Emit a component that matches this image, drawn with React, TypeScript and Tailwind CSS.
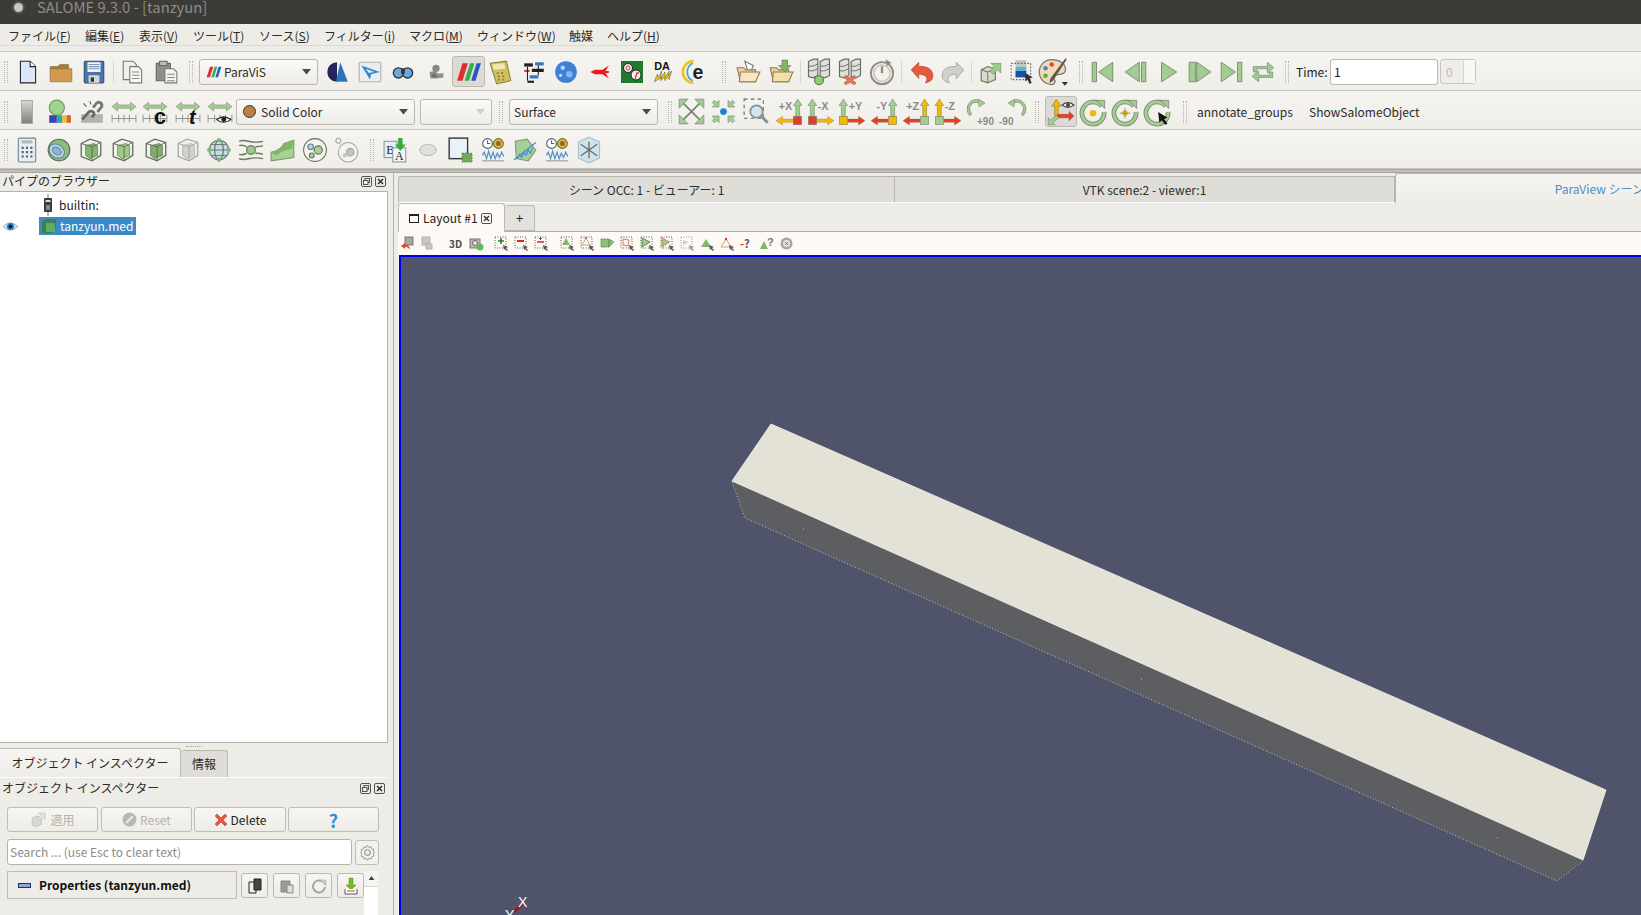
import type { ReactNode } from "react";

const GREEN = "#a3cc93";
const GSTROKE = "#74836a";
const RED = "#e03f28";
const YEL = "#f5b800";

function Ico({ children, s = 26 }: { children: ReactNode; s?: number }) {
  return (
    <svg width={s} height={s} viewBox="0 0 24 24" className="block shrink-0 overflow-visible">
      {children}
    </svg>
  );
}

function S({ w = "w-[32px]", on, children }: { w?: string; on?: boolean; children: ReactNode }) {
  return (
    <div className={`${w} flex h-[31px] shrink-0 items-center justify-center ${on ? "rounded-[3px] border border-[#bdbab4] bg-[#dcdad5]" : ""}`}>
      {children}
    </div>
  );
}

function Grip({ w = "w-[11px]" }: { w?: string }) {
  return (
    <div className={`${w} flex shrink-0 justify-center`}>
      <div className="h-[22px] w-[4px] border-x border-dotted border-[#b5b2ab]" />
    </div>
  );
}

function Sep({ w }: { w: string }) {
  return (
    <div className={`${w} flex shrink-0 justify-center`}>
      <div className="h-[22px] w-px bg-[#d8d5cf]" />
    </div>
  );
}

function Caret({ c = "#4a4a48" }: { c?: string }) {
  return (
    <svg width="9" height="6" viewBox="0 0 9 6" className="shrink-0">
      <path d="M0 0h9L4.500 5.500z" fill={c} />
    </svg>
  );
}

function Combo({ w, children, off }: { w: string; children?: ReactNode; off?: boolean }) {
  return (
    <div className={`${w} flex h-[26px] shrink-0 items-center justify-between rounded-[3px] border border-[#bab7b1] bg-gradient-to-b from-[#fbfaf8] to-[#eeece7] pl-[6px] pr-[6px] text-[12px] text-[#2a2a2a]`}>
      <div className="flex items-center gap-[5px]">{children}</div>
      <Caret c={off ? "#d0cec8" : "#4a4a48"} />
    </div>
  );
}

const Logo = ({ s = 26 }: { s?: number }) => (
  <Ico s={s}>
    <path d="M1 20 6 4h5L6 20z" fill="#de2f2f" />
    <path d="M8 20 13 4h4l-5 16z" fill="#2fb04a" />
    <path d="M14 20 19 4h4l-5 16z" fill="#2a58cc" />
  </Ico>
);

const Folder = ({ f = "#d19a4c" }: { f?: string }) => (
  <>
    <path d="M2 7h7l2-2h8v4H2z" fill="#a97a3a" stroke="#8a6a35" strokeWidth=".6" />
    <path d="M2 9h20v12H2z" fill={f} stroke="#8a6a35" strokeWidth=".6" />
  </>
);

const Server = () => (
  <>
    <path d="M3 3l4-2h4v14l-4 2-4-1z" fill="#dfe0da" stroke="#6b6b66" />
    <path d="M13 3l4-2h4v14l-4 2-4-1z" fill="#dfe0da" stroke="#6b6b66" />
    <path d="M3 7h4l4-2M13 7h4l4-2M3 11h4l4-2M13 11h4l4-2" stroke="#6b6b66" fill="none" strokeWidth=".8" />
  </>
);

// double arrow over a ruler, used by the rescale buttons
const Rescale = ({ children }: { children?: ReactNode }) => (
  <Ico>
    <path d="M1 7l5-4v2.500h12V3l5 4-5 4V8.500H6V11z" fill={GREEN} stroke={GSTROKE} strokeWidth=".5" />
    <path d="M1 18h22M1 14.500v7M7 14.500v7M12 14.500v7M17 14.500v7M23 14.500v7" stroke="#8a8a86" strokeWidth=".8" />
    {children}
  </Ico>
);

function AxisIcon({ label, flip, up, side, box }: { label: string; flip: boolean; up: string; side: string; box: string }) {
  const t = flip ? "translate(24 0) scale(-1 1)" : undefined;
  return (
    <svg width="26" height="26" viewBox="0 0 24 24" className="block shrink-0 overflow-visible">
      <g transform={t}>
        <path d="M4 0l4 6H5.800v10H2.200V6H0z" fill={up} stroke={GSTROKE} strokeWidth=".5" />
        <path d="M8 18.500h10V16l6 4-6 4v-2.500H8z" fill={side} stroke="#8f6a40" strokeWidth=".3" />
        <rect x=".3" y="16" width="7.700" height="7.700" fill={box} stroke="#777" strokeWidth=".5" />
      </g>
      <text x={flip ? 15 : 9} y="10" fontSize="10" fill="#8a8a86" fontFamily="Liberation Sans" fontWeight="700" textAnchor={flip ? "end" : "start"}>
        {label}
      </text>
    </svg>
  );
}

const Spin = ({ children }: { children?: ReactNode }) => (
  <Ico s={28}>
    <path d="M19.500 7A9.500 9.500 0 1 0 21.500 12" fill="none" stroke={GSTROKE} strokeWidth="4" />
    <path d="M19.500 7A9.500 9.500 0 1 0 21.500 12" fill="none" stroke={GREEN} strokeWidth="2.600" />
    <path d="M15 2h7v7z" fill={GREEN} stroke={GSTROKE} strokeWidth=".6" />
    {children}
  </Ico>
);

const Vcr = ({ d }: { d: string }) => (
  <Ico>
    <path d={d} fill={GREEN} stroke={GSTROKE} strokeWidth=".8" />
  </Ico>
);

const CubeG = ({ f = "#83b66f", s = "#5f6d57" }: { f?: string; s?: string }) => (
  <Ico>
    <path d="M3 6l8-4 10 3v12l-8 5-10-4z" fill="none" stroke={s} strokeWidth="1.200" />
    <path d="M7 8l8-2 3 2v9l-7 3-4-3z" fill={f} stroke={s} strokeWidth=".6" />
    <path d="M3 6l10 3v13M13 9l8-4" fill="none" stroke={s} strokeWidth=".9" />
  </Ico>
);

const ClockChart = () => (
  <Ico>
    <circle cx="7" cy="6" r="4.500" fill="#fff" stroke="#55606a" />
    <path d="M7 3v3h2.500" stroke="#55606a" fill="none" />
    <circle cx="17" cy="6" r="4.500" fill="#e5b640" stroke="#7d6a2a" />
    <rect x="15" y="4" width="4" height="4" fill="#7d6a2a" />
    <path d="M2 17l2-3 2 6 2-7 2 7 2-6 2 6 2-5 2 4 2-5 2 4" fill="none" stroke="#4d8fc9" strokeWidth="1.100" />
    <path d="M2 22h20" stroke="#9a9a95" />
  </Ico>
);

function Tiny({ children }: { children: ReactNode }) {
  return (
    <svg width="15" height="15" viewBox="0 0 15 15" className="block shrink-0">
      {children}
    </svg>
  );
}

const SelBox = ({ children }: { children?: ReactNode }) => (
  <Tiny>
    <rect x="1" y="1" width="11" height="11" fill="none" stroke="#555" strokeDasharray="1 1.500" />
    {children}
    <path d="M9 9l5 2-2 1 2 2-1 1-2-2-1 1z" fill="#555" />
  </Tiny>
);

const DockBtns = () => (
  <div className="flex items-center gap-[3px]">
    <svg width="11" height="11" viewBox="0 0 11 11">
      <rect x=".5" y=".5" width="10" height="10" rx="1.500" fill="none" stroke="#55534e" />
      <rect x="4" y="2.500" width="4.500" height="4" fill="none" stroke="#55534e" />
      <rect x="2.500" y="4.500" width="4.500" height="4" fill="#f1efea" stroke="#55534e" />
    </svg>
    <svg width="11" height="11" viewBox="0 0 11 11">
      <rect x=".5" y=".5" width="10" height="10" rx="1.500" fill="none" stroke="#55534e" />
      <path d="M3 3l5 5M8 3L3 8" stroke="#33322f" strokeWidth="1.600" />
    </svg>
  </div>
);

function Toolbar({ pad = "pt-[1px]", children }: { pad?: string; children: ReactNode }) {
  return (
    <div className={`${pad} flex h-[39px] items-center border-b border-[#c9c6c0] bg-gradient-to-b from-[#f6f4f0] to-[#f0eee9]`}>
      {children}
    </div>
  );
}

function MenuItem({ w, label, k }: { w: string; label: string; k?: string }) {
  return (
    <div className={`${w} shrink-0 border-b border-[#dcdad4] pb-[1px] pl-[8px] text-[12px] leading-[16px] text-[#2b2b29]`}>
      {label}
      {k && (
        <>
          (<span className="underline">{k}</span>)
        </>
      )}
    </div>
  );
}

function Row1() {
  return (
    <Toolbar>
      <Grip />
      <S w="w-[33px]">
        <Ico>
          <path d="M5 2h9l5 5v15H5z" fill="#dbe6fb" stroke="#222" />
          <path d="M14 2v5h5" fill="#fff" stroke="#222" />
        </Ico>
      </S>
      <S w="w-[33px]">
        <Ico><Folder /></Ico>
      </S>
      <S w="w-[33px]">
        <Ico>
          <rect x="3" y="2" width="18" height="20" rx="1" fill="#4a72ab" stroke="#2f4d78" />
          <rect x="6" y="3" width="12" height="9" fill="#f2f4f7" />
          <path d="M7 5h10M7 7h10M7 9h10" stroke="#7a93b8" />
          <rect x="7" y="15" width="10" height="7" fill="#d6d6d0" />
          <rect x="9" y="17" width="3" height="4" fill="#333" />
        </Ico>
      </S>
      <Sep w="w-[6px]" />
      <S w="w-[33px]">
        <Ico>
          <path d="M3 2h9l3 3v14H3z" fill="#eeeeea" stroke="#777" />
          <path d="M9 7h8l3 3v12H9z" fill="#f7f7f4" stroke="#777" />
          <path d="M11 12h7M11 15h7M11 18h7" stroke="#888" />
        </Ico>
      </S>
      <S w="w-[33px]">
        <Ico>
          <path d="M3 4h13v16H3z" fill="#8f8d88" stroke="#666" />
          <path d="M6 2h7v4H6z" fill="#bdbbb5" stroke="#666" />
          <path d="M11 9h8l3 3v10H11z" fill="#f3f3ef" stroke="#777" />
          <path d="M13 14h7M13 17h7M13 20h7" stroke="#888" />
        </Ico>
      </S>
      <Grip w="w-[17px]" />
      <Combo w="w-[119px]">
        <Logo s={16} />
        <span className="-ml-[3px]">ParaViS</span>
      </Combo>
      <div className="w-[2px] shrink-0" />
      <S w="w-[33px]">
        <Ico>
          <path d="M12 3a9 9 0 0 0 0 18z" fill="#26245c" />
          <path d="M15 3l7 18H11z" fill="#2c74b8" />
        </Ico>
      </S>
      <S w="w-[33px]">
        <Ico>
          <rect x="2" y="3" width="20" height="18" rx="1" fill="#e9eef2" stroke="#aab2b8" />
          <path d="M4 6l17 6-8 2-1 5z" fill="#2f88c5" />
          <path d="M8 9l8 3-5 1z" fill="#e9eef2" />
        </Ico>
      </S>
      <S w="w-[33px]">
        <Ico s={22}>
          <circle cx="7" cy="13" r="5.500" fill="#6aa9dc" stroke="#334" strokeWidth="1.500" />
          <circle cx="17" cy="13" r="5.500" fill="#6aa9dc" stroke="#334" strokeWidth="1.500" />
          <rect x="10" y="8" width="4" height="6" fill="#334" />
        </Ico>
      </S>
      <S w="w-[33px]">
        <Ico s={22}>
          <circle cx="12" cy="8" r="4" fill="#8a8883" />
          <path d="M5 12l5-1 5 3 5-1v5l-7 1H6z" fill="#8f8d88" />
          <path d="M7 17l3-4 3 5z" fill="#6a6864" />
        </Ico>
      </S>
      <S w="w-[33px]" on>
        <Logo s={26} />
      </S>
      <S>
        <Ico>
          <path d="M2 4l15-2 4 18-13 3z" fill="#cfc15f" stroke="#8d8440" />
          <path d="M4 5l11-1 1 5-11 1z" fill="#efe9b0" />
          <path d="M8 13h2M12 13h2M9 16h2M13 16h2M9 19h2M13 19h2" stroke="#8d8440" strokeWidth="1.500" />
        </Ico>
      </S>
      <S w="w-[33px]">
        <Ico>
          <path d="M3 4h8v3H3z" fill="#222" />
          <path d="M13 3h8v3h-8z" fill="#3a75c4" />
          <path d="M3 10h5v2H3z" fill="#d94343" />
          <path d="M10 9h11v3H10z" fill="#222" />
          <path d="M8 15h8v3H8z" fill="#3a75c4" />
          <path d="M6 20h6v2H6z" fill="#222" />
          <path d="M6 7v13M16 6v9" stroke="#222" />
        </Ico>
      </S>
      <S w="w-[31px]">
        <Ico>
          <circle cx="12" cy="12" r="10" fill="#3f7fd6" />
          <circle cx="9" cy="8" r="2" fill="#bcd6f5" />
          <circle cx="15" cy="14" r="3" fill="#87b4ea" />
          <circle cx="7" cy="15" r="1.500" fill="#bcd6f5" />
        </Ico>
      </S>
      <S w="w-[34px]">
        <Ico>
          <path d="M1 12h4l4-2h7l6-4-3 5h3v2h-3l3 5-6-4H9l-4-2H1z" fill="#ed1c24" />
        </Ico>
      </S>
      <S w="w-[33px]">
        <Ico s={24}>
          <rect x="1" y="1" width="22" height="22" fill="#1f7a2c" />
          <circle cx="8" cy="8" r="4.500" fill="#eee" stroke="#222" />
          <circle cx="8" cy="8" r="2" fill="none" stroke="#d33" />
          <circle cx="16" cy="15" r="5" fill="#eee" stroke="#222" />
          <path d="M15 19l2-6h2" fill="none" stroke="#d33" strokeWidth="1.300" />
        </Ico>
      </S>
      <S w="w-[33px]">
        <Ico>
          <text x="2" y="10" fontSize="10" fontWeight="700" fontFamily="Liberation Sans" fill="#111">DA</text>
          <path d="M2 21l3-7 1 3 3-6-1 7 4-6v5l4-6-1 5 3-5-2 8-2-2-2 3-1-3-3 3 1-3z" fill="#f2c811" stroke="#333" strokeWidth=".4" />
        </Ico>
      </S>
      <S w="w-[33px]">
        <Ico>
          <path d="M8 2A10 10 0 0 0 8 22" fill="none" stroke="#f0c419" strokeWidth="2.500" />
          <path d="M7 4A9 9 0 0 0 7 20" fill="none" stroke="#3ca0dc" strokeWidth="1.500" />
          <text x="7" y="18" fontSize="18" fontWeight="700" fontFamily="Liberation Sans" fill="#222">e</text>
        </Ico>
      </S>
      <Grip w="ml-[3px] w-[14px]" />
      <S w="w-[33px]">
        <Ico>
          <path d="M9 2l8 4-4 9z" fill="#fff" stroke="#777" />
          <path d="M2 8h6l2 2h9v11H5z" fill="#f3d59a" stroke="#8a7a5a" />
          <path d="M5 12h18l-4 9H4z" fill="#fae6bc" stroke="#8a7a5a" />
        </Ico>
      </S>
      <S w="w-[33px]">
        <Ico>
          <path d="M2 8h6l2 2h9v11H5z" fill="#eed08d" stroke="#8a7a5a" />
          <path d="M5 12h18l-4 9H4z" fill="#f5dfa9" stroke="#8a7a5a" />
          <path d="M13 1h5v5h3l-5.500 6L10 6h3z" fill="#7fb765" stroke="#5a7a50" strokeWidth=".6" />
        </Ico>
      </S>
      <Sep w="w-[6px]" />
      <S w="w-[31px]">
        <Ico s={28}>
          <Server />
          <circle cx="12" cy="19" r="3.800" fill="#8fcf6f" stroke="#5a7a50" />
        </Ico>
      </S>
      <S>
        <Ico s={28}>
          <Server />
          <path d="M8 15l4 2 4-2 1 2-3 2 3 2-1 2-4-2-4 2-1-2 3-2-3-2z" fill="#e8735a" stroke="#a0442e" strokeWidth=".4" />
        </Ico>
      </S>
      <S w="w-[31px]">
        <Ico s={28}>
          <circle cx="12" cy="13" r="9.500" fill="none" stroke="#8f8d80" strokeWidth="1.600" />
          <circle cx="12" cy="13" r="7" fill="none" stroke="#c4c2b6" strokeWidth="1.200" />
          <path d="M12 7v6" stroke="#8f8d80" strokeWidth="2" />
          <path d="M15 1l5 3-4 3z" fill="#8f8d80" />
        </Ico>
      </S>
      <Sep w="w-[9px]" />
      <S w="w-[31px]">
        <Ico>
          <path d="M2 10l7-7v4c8-1 13 3 13 8s-3 6-7 7c3-3 2-8-6-8v4z" fill="#e35a3e" stroke="#b13f28" strokeWidth=".6" />
        </Ico>
      </S>
      <S w="w-[31px]">
        <Ico>
          <path d="M22 10l-7-7v4C7 6 2 10 2 15s3 6 7 7c-3-3-2-8 6-8v4z" fill="#d0cfcb" stroke="#a5a49f" strokeWidth=".8" />
        </Ico>
      </S>
      <Sep w="w-[7px]" />
      <S w="w-[31px]">
        <Ico>
          <path d="M3 10l6-3 7 2v10l-7 3-6-2z" fill="#d9dacf" stroke="#6e8a60" strokeWidth="1.200" />
          <path d="M3 10l6 2v10M9 12l7-3" fill="none" stroke="#6e8a60" />
          <path d="M12 4h9v9l-3-3-4 4-3-3 4-4z" fill="#9ccc88" stroke="#6e8a60" strokeWidth=".6" />
        </Ico>
      </S>
      <S w="w-[31px]">
        <Ico>
          <rect x="6" y="1" width="10" height="6" fill="#c9c6bd" />
          <rect x="6" y="7" width="10" height="4" fill="#58b9c8" />
          <rect x="6" y="11" width="10" height="6" fill="#1e4fa8" />
          <rect x="2" y="4" width="18" height="15" fill="none" stroke="#666" strokeDasharray="1.500 1.500" />
          <path d="M15 13l7 4-3 1 2 4-2 1-2-4-2 2z" fill="#333" />
        </Ico>
      </S>
      <S>
        <Ico s={30}>
          <path d="M11 2C5 2 1 7 1 12s4 10 10 10c3 0 3-3 2-4-1-2 0-4 3-4 4 0 6-1 6-4 0-5-5-8-11-8z" fill="#f3d9b5" stroke="#777" />
          <circle cx="6" cy="9" r="1.800" fill="#3a8fd0" />
          <circle cx="11" cy="6" r="1.800" fill="#e2452f" />
          <circle cx="6" cy="15" r="1.800" fill="#59ad4a" />
          <path d="M22 1l1 1-11 17-3 2 1-4z" fill="#5f5a4a" />
          <path d="M19 20h5l-2.500 3z" fill="#333" />
        </Ico>
      </S>
      <Grip w="ml-[6px] w-[12px]" />
      <S>
        <Vcr d="M2 3h4v18H2zM21 3v18L8 12z" />
      </S>
      <S>
        <Vcr d="M16 3v18L3 12zM18 3h4v18h-4z" />
      </S>
      <S w="w-[33px]">
        <Vcr d="M6 3v18l14-9z" />
      </S>
      <S w="w-[31px]">
        <Vcr d="M2 3h6v18H2zM9 3l13 9-13 9z" />
      </S>
      <S>
        <Vcr d="M3 3l13 9-13 9zM18 3h4v18h-4z" />
      </S>
      <S w="w-[31px]">
        <Ico>
          <path d="M3 12V7h13V3l6 5-6 5V9H6v3zM21 12v5H8v4l-6-5 6-5v4h10v-3z" fill={GREEN} stroke={GSTROKE} strokeWidth=".6" />
        </Ico>
      </S>
      <Grip w="w-[18px]" />
      <div className="w-[34px] shrink-0 text-[12px] text-[#222]">Time:</div>
      <div className="flex h-[26px] w-[108px] shrink-0 items-center rounded-[3px] border border-[#bab7b1] bg-white pl-[3px] text-[12px] text-[#111]">
        1
      </div>
      <div className="ml-[2px] flex h-[25px] w-[36px] shrink-0 rounded-[3px] border border-[#c9c6c0] bg-[#efede8]">
        <div className="flex w-[22px] items-center pl-[5px] text-[12px] text-[#bdbbb5]">0</div>
        <div className="flex-1 border-l border-[#d8d5cf] bg-[#f8f7f4]" />
      </div>
    </Toolbar>
  );
}

function Row2() {
  return (
    <Toolbar pad="pt-[3px]">
      <Grip />
      <S>
        <svg width="12" height="24" viewBox="0 0 12 24">
          <defs>
            <linearGradient id="grayBar" x1="0" x2="0" y1="0" y2="1">
              <stop offset="0" stopColor="#d8d7d3" />
              <stop offset="1" stopColor="#807e7a" />
            </linearGradient>
          </defs>
          <rect x=".5" y=".5" width="11" height="23" fill="url(#grayBar)" stroke="#aaa" />
        </svg>
      </S>
      <S>
        <Ico>
          <circle cx="10" cy="8" r="7" fill="#9bd68a" stroke="#6e9a60" />
          <rect x="3" y="15" width="7" height="7" fill="#3b3fb8" />
          <rect x="10" y="15" width="5" height="7" fill="#2fa6a6" />
          <rect x="15" y="15" width="4" height="7" fill="#e8c22c" />
          <rect x="19" y="15" width="4" height="7" fill="#e2602c" />
        </Ico>
      </S>
      <S w="w-[33px]">
        <Ico>
          <rect x="2" y="14" width="20" height="8" fill="#b5b3ae" />
          <path d="M13 8l3-4a3 3 0 0 1 5 3l-4 5" fill="none" stroke="#7a7875" strokeWidth="2.600" />
          <path d="M3 19l6-7a3 3 0 0 1 5 2l-2 3" fill="none" stroke="#6a6865" strokeWidth="2.600" />
          <path d="M7 7L4 4M11 5l-1-3" stroke="#555" />
        </Ico>
      </S>
      <S w="w-[31px]"><Rescale /></S>
      <S>
        <Rescale>
          <text x="11" y="23" fontSize="20" fontWeight="700" fontFamily="Liberation Sans" fill="#111">c</text>
        </Rescale>
      </S>
      <S w="w-[33px]">
        <Rescale>
          <text x="13" y="23" fontSize="18" fontWeight="700" fontStyle="italic" fontFamily="Liberation Sans" fill="#111">t</text>
        </Rescale>
      </S>
      <S>
        <Rescale>
          <path d="M9 19q6-5 13 0-7 5-13 0z" fill="#fff" stroke="#222" />
          <circle cx="15.500" cy="19" r="2.300" fill="#222" />
        </Rescale>
      </S>
      <Combo w="w-[179px]">
        <span className="block h-[13px] w-[13px] rounded-full border border-[#333] bg-[#c67e3c]" />
        <span>Solid Color</span>
      </Combo>
      <div className="w-[5px] shrink-0" />
      <Combo w="w-[72px]" off />
      <Grip w="w-[17px]" />
      <Combo w="w-[149px]">
        <span className="-ml-[2px]">Surface</span>
      </Combo>
      <Grip w="ml-[6px] w-[11px]" />
      <S>
        <Ico s={27}>
          <path d="M3 3l18 18M21 3L3 21" stroke="#7a7a70" strokeWidth="1.400" />
          <path d="M1 1h8L1 9zM23 1v8l-8-8zM1 23v-8l8 8zM23 23h-8l8-8z" fill={GREEN} stroke={GSTROKE} strokeWidth=".6" />
        </Ico>
      </S>
      <S w="w-[33px]">
        <Ico s={27}>
          <circle cx="12" cy="12" r="3" fill="#1f84c9" />
          <path d="M8 8H2l2-2-2-2 2-2 2 2 2-2zM16 8h6l-2-2 2-2-2-2-2 2-2-2zM8 16H2l2 2-2 2 2 2 2-2 2 2zM16 16h6l-2 2 2 2-2 2-2-2-2 2z" fill={GREEN} stroke={GSTROKE} strokeWidth=".5" />
        </Ico>
      </S>
      <S>
        <Ico s={27}>
          <rect x="1" y="1" width="17" height="17" fill="none" stroke="#666" strokeDasharray="3 3" />
          <circle cx="12" cy="12" r="5.500" fill="#d4e6f2" stroke="#8a8f94" strokeWidth="1.600" />
          <path d="M16 16l6 6" stroke="#8a8f94" strokeWidth="2.500" />
        </Ico>
      </S>
      <S w="w-[33px]"><AxisIcon label="+X" flip up={GREEN} side={YEL} box={RED} /></S>
      <S w="w-[31px]"><AxisIcon label="-X" flip={false} up={GREEN} side={YEL} box={RED} /></S>
      <S><AxisIcon label="+Y" flip={false} up={GREEN} side={RED} box={YEL} /></S>
      <S><AxisIcon label="-Y" flip up={GREEN} side={RED} box={YEL} /></S>
      <S><AxisIcon label="+Z" flip up={YEL} side={RED} box={GREEN} /></S>
      <S w="w-[31px]"><AxisIcon label="-Z" flip={false} up={YEL} side={RED} box={GREEN} /></S>
      <S w="w-[34px]">
        <svg width="30" height="28" viewBox="0 0 30 28" className="overflow-visible">
          <path d="M17 5A8 8 0 1 0 6 17" fill="none" stroke={GSTROKE} strokeWidth="3.200" />
          <path d="M17 5A8 8 0 1 0 6 17" fill="none" stroke={GREEN} strokeWidth="2" />
          <path d="M13 1l7 4-6 4z" fill={GREEN} stroke={GSTROKE} strokeWidth=".5" />
          <text x="29" y="27" fontSize="10" fontWeight="700" textAnchor="end" fontFamily="Liberation Sans" fill="#8a8a86">+90</text>
        </svg>
      </S>
      <S w="w-[31px]">
        <svg width="30" height="28" viewBox="0 0 30 28" className="overflow-visible">
          <path d="M13 5a8 8 0 1 1 11 12" fill="none" stroke={GSTROKE} strokeWidth="3.200" />
          <path d="M13 5a8 8 0 1 1 11 12" fill="none" stroke={GREEN} strokeWidth="2" />
          <path d="M17 1l-7 4 6 4z" fill={GREEN} stroke={GSTROKE} strokeWidth=".5" />
          <text x="1" y="27" fontSize="10" fontWeight="700" fontFamily="Liberation Sans" fill="#8a8a86">-90</text>
        </svg>
      </S>
      <Grip w="w-[17px]" />
      <S on>
        <Ico s={28}>
          <path d="M8 1l4 6h-2.500v8H6.500V7H4z" fill={YEL} stroke="#8a7a30" strokeWidth=".5" />
          <path d="M9 14h10v-2.500l4 4-4 4V17H9z" fill={RED} stroke="#a0442e" strokeWidth=".4" />
          <path d="M8 15l2 2-5 4 2 2H1v-6l2 2z" fill={GREEN} stroke={GSTROKE} strokeWidth=".5" />
          <path d="M13 6q5-4 10 0-5 4-10 0z" fill="#fff" stroke="#444" />
          <circle cx="18" cy="6" r="1.800" fill="#444" />
        </Ico>
      </S>
      <S><Spin><circle cx="12" cy="13" r="2.800" fill={YEL} /></Spin></S>
      <S>
        <Spin>
          <circle cx="12" cy="13" r="2.400" fill={YEL} />
          <path d="M12 8.500v9M7.500 13h9" stroke="#8a8a70" strokeWidth=".8" />
        </Spin>
      </S>
      <S>
        <Spin>
          <path d="M13 12l8 5-3 1 3 4-2 1-3-4-2 2z" fill="#111" />
        </Spin>
      </S>
      <Grip w="w-[24px]" />
      <div className="w-[112px] shrink-0 text-[12px] text-[#2a2a2a]">annotate_groups</div>
      <div className="shrink-0 text-[12px] text-[#2a2a2a]">ShowSalomeObject</div>
    </Toolbar>
  );
}

function Row3() {
  return (
    <Toolbar pad="pt-[2px]">
      <Grip />
      <S>
        <Ico>
          <rect x="4" y="1" width="16" height="22" rx="1" fill="#e7edf2" stroke="#74828c" />
          <rect x="7" y="3" width="10" height="3" fill="#a9bcc9" />
          <path d="M7 10h2M11 10h2M15 10h2M7 14h2M11 14h2M15 14h2M7 18h2M11 18h2M15 18h2" stroke="#56646e" strokeWidth="2" />
        </Ico>
      </S>
      <S>
        <Ico>
          <circle cx="12" cy="12" r="10" fill="#8ebc7a" stroke="#5f6d57" />
          <ellipse cx="10" cy="13" rx="7.500" ry="6" fill="#bcd9e8" stroke="#5f8aa0" transform="rotate(35 10 13)" />
          <ellipse cx="10" cy="13" rx="4.500" ry="3.200" fill="#8fb5c9" stroke="#5f8aa0" transform="rotate(35 10 13)" />
        </Ico>
      </S>
      <S><CubeG /></S>
      <S><CubeG f="#9ccb88" /></S>
      <S w="w-[33px]"><CubeG f="#7fae6a" /></S>
      <S w="w-[31px]"><CubeG f="#d2d2cc" s="#a8a8a2" /></S>
      <S>
        <Ico>
          <circle cx="12" cy="12" r="9" fill="#c4dcec" stroke="#5f6d57" />
          <ellipse cx="12" cy="12" rx="4" ry="9" fill="none" stroke="#5f6d57" />
          <path d="M3 12h18M5 7h14M5 17h14" stroke="#5f6d57" strokeWidth=".8" />
          <circle cx="12" cy="3" r="2" fill="#7fb765" />
          <circle cx="12" cy="21" r="2" fill="#7fb765" />
          <circle cx="3" cy="12" r="2" fill="#7fb765" />
          <circle cx="21" cy="12" r="2" fill="#7fb765" />
        </Ico>
      </S>
      <S w="w-[31px]">
        <Ico>
          <path d="M1 4c7-3 10 3 22 0M1 8c3-1 5 0 7 1M16 9c3 0 5 0 7-1M1 16c3 1 5 0 7-1M16 15c3 0 5 0 7 1M1 20c7 3 10-3 22 0" fill="none" stroke="#6a7a60" strokeWidth="1.300" />
          <circle cx="12" cy="12" r="4" fill="#9ccb88" stroke="#5f6d57" />
        </Ico>
      </S>
      <S w="w-[33px]">
        <Ico>
          <path d="M1 14q8-1 12-8l9-3v16l-21 3z" fill="#a7d197" stroke="#7d9a70" />
          <path d="M1 14q8-1 12-8l9-3-2 8q-9 1-14 6z" fill="#7fb765" />
        </Ico>
      </S>
      <S w="w-[31px]">
        <Ico>
          <circle cx="12" cy="12" r="10.500" fill="#f5f4ef" stroke="#66705e" />
          <circle cx="8" cy="9" r="2.600" fill="#b9d2e2" stroke="#5f7a8a" />
          <circle cx="15" cy="12" r="3.800" fill="#a3d38f" stroke="#66705e" />
          <circle cx="9" cy="17" r="2.200" fill="#a3d38f" stroke="#66705e" />
        </Ico>
      </S>
      <S w="w-[33px]">
        <Ico>
          <circle cx="13" cy="14" r="9" fill="#f5f4ef" stroke="#a5a49f" />
          <circle cx="15" cy="14" r="3.500" fill="#c4c3be" stroke="#a5a49f" />
          <circle cx="10" cy="17" r="2" fill="#c4c3be" />
          <circle cx="4" cy="3.500" r="2.300" fill="#f5f4ef" stroke="#a5a49f" />
        </Ico>
      </S>
      <Grip w="w-[17px]" />
      <S>
        <Ico>
          <rect x="1" y="4" width="12" height="15" fill="#e8eef5" stroke="#8b98a5" />
          <text x="3" y="16" fontSize="11" fontFamily="Liberation Serif" fill="#222">B</text>
          <rect x="9" y="10" width="12" height="13" fill="#f5f5f2" stroke="#8b98a5" />
          <text x="11" y="21" fontSize="11" fontFamily="Liberation Serif" fill="#222">A</text>
          <path d="M14 1h4v6h3l-5 6-5-6h3z" fill="#2fae3f" />
        </Ico>
      </S>
      <S w="w-[31px]">
        <Ico s={22}>
          <ellipse cx="12" cy="12" rx="9" ry="6" fill="#dfe0de" stroke="#8a8a86" strokeDasharray="1.500 1" />
        </Ico>
      </S>
      <S w="w-[33px]">
        <Ico>
          <rect x="2" y="1" width="17" height="19" fill="#cfe3f5" stroke="#3b3b3b" strokeWidth="1.300" />
          <path d="M3 2h15v10l-5 7H3z" fill="#e9f2fb" />
          <rect x="14" y="15" width="9" height="8" fill="#6fae58" stroke="#4f8a3d" strokeDasharray="1.500 1" />
        </Ico>
      </S>
      <S w="w-[33px]"><ClockChart /></S>
      <S>
        <Ico>
          <path d="M3 4l11-2 8 10-7 10-11-2z" fill="#a7cf9a" stroke="#7d9a70" />
          <path d="M2 21L22 5M5 20l2-4 2 3 2-5 2 3 2-5 2 3 2-5" fill="none" stroke="#3d8fc9" strokeWidth="1.100" />
        </Ico>
      </S>
      <S w="w-[31px]"><ClockChart /></S>
      <S w="w-[33px]">
        <Ico s={28}>
          <path d="M12 1l9 4v14l-9 4-9-4V5z" fill="#cfe3ef" stroke="#a9bdc9" />
          <path d="M5 7l14 10M19 7L5 17M12 5v14" stroke="#6a6a5c" strokeWidth="1.100" />
        </Ico>
      </S>
    </Toolbar>
  );
}

function Viewport() {
  return (
    <div className="ml-px flex-1 overflow-hidden border-l-2 border-t-2 border-[#0000f0] bg-[#50546a] pl-px pt-px">
      <svg width="1239" height="658" viewBox="402 257 1239 658" className="block">
        <rect x="402" y="257" width="1239" height="658" fill="#50546a" />
        <path d="M732 480 745 517 1557 880 1583 859z" fill="#5d5e61" />
        <path d="M771 423 732 480 1583 859 1606 789z" fill="#e4e1d7" />
        <path d="M771 423 1606 789 1583 859 732 480z" fill="none" stroke="#f6f5ee" strokeWidth=".8" />
        <path d="M732 481 745 517 1557 880 1583 860" fill="none" stroke="#c3c4c8" strokeWidth="1" strokeDasharray="1 2" />
        <path d="M803 528h1M1141 678h1M1497 837h1" stroke="#b9bac0" />
        <path d="M513 909l9-7 1 3-8 7z" fill="#9a1c1c" />
        <text x="518" y="906" fontSize="14" fill="#fff" fontFamily="Liberation Sans">X</text>
        <text x="505" y="919" fontSize="14" fill="#fff" fontFamily="Liberation Sans">Y</text>
      </svg>
    </div>
  );
}

function ViewerTools() {
  return (
    <div className="flex h-[23px] items-center bg-[#fdf9f5] pl-[2px]">
      <div className="flex w-[20px] justify-start">
        <Tiny>
          <rect x="5" y="1" width="8" height="8" fill="#a8a69f" stroke="#777" />
          <path d="M1 10l4-3v2c4 0 5 2 5 5-1-2-2-3-5-3v2z" fill="#e2452f" />
        </Tiny>
      </div>
      <div className="flex w-[20px]">
        <Tiny>
          <rect x="2" y="1" width="8" height="8" fill="#c9c7c1" stroke="#b4b2ac" />
          <path d="M6 7l6 1v5H6z" fill="#c9c7c1" stroke="#b4b2ac" />
        </Tiny>
      </div>
      <div className="w-[9px]" />
      <div className="w-[20px] text-[10px] font-bold leading-none text-[#4b4b48]">3D</div>
      <div className="w-[25px]">
        <Tiny>
          <rect x="1" y="3" width="10" height="9" fill="#bdbbb5" stroke="#777" />
          <circle cx="6" cy="7" r="2.500" fill="#e8e6e0" stroke="#666" />
          <circle cx="11" cy="11" r="3.500" fill="#5bbd5b" />
        </Tiny>
      </div>
      <div className="flex w-[20px]">
        <SelBox><path d="M4 5h6M7 2v6" stroke="#1d8a2c" strokeWidth="1.600" /></SelBox>
      </div>
      <div className="flex w-[20px]">
        <SelBox><path d="M3 5h7" stroke="#d22" strokeWidth="2" /></SelBox>
      </div>
      <div className="flex w-[26px]">
        <SelBox><path d="M3 6h7" stroke="#d22" strokeWidth="1.500" /><path d="M6.500 1v3M5 2.500h3" stroke="#1d8a2c" /></SelBox>
      </div>
      <div className="flex w-[20px]">
        <SelBox><path d="M6 2l4 7H2z" fill="#7fb765" /></SelBox>
      </div>
      <div className="flex w-[20px]">
        <SelBox><path d="M6 2l4 7H2z" fill="none" stroke="#c9a86a" /><circle cx="6" cy="2" r="1" fill="#d33" /></SelBox>
      </div>
      <div className="flex w-[20px]">
        <Tiny>
          <path d="M1 3h8l5 3-5 5H1z" fill="#8cc07a" stroke="#5f8a50" strokeDasharray="1 .5" />
          <path d="M9 3v8" stroke="#5f8a50" />
        </Tiny>
      </div>
      <div className="flex w-[20px]">
        <SelBox><path d="M3 3l6 1-1 6-5-1z" fill="none" stroke="#d9775a" /></SelBox>
      </div>
      <div className="flex w-[20px]">
        <SelBox><path d="M2 2l8 4-8 5z" fill="#9ccb88" stroke="#5f8a50" /></SelBox>
      </div>
      <div className="flex w-[20px]">
        <SelBox><path d="M2 2l8 4-8 5z" fill="#9ccb88" stroke="#d33" strokeDasharray="1 1" /></SelBox>
      </div>
      <div className="flex w-[20px] opacity-60">
        <SelBox><path d="M3 4l6 2-6 3z" fill="#9ccb88" /></SelBox>
      </div>
      <div className="flex w-[20px]">
        <Tiny>
          <path d="M6 3l5 8H1z" fill="#7fb765" />
          <path d="M9 9l5 2-2 1 2 2-1 1-2-2-1 1z" fill="#555" />
        </Tiny>
      </div>
      <div className="flex w-[20px]">
        <Tiny>
          <path d="M6 3l5 8H1z" fill="none" stroke="#c9a86a" />
          <circle cx="6" cy="3" r="1.200" fill="#d33" />
          <path d="M9 9l5 2-2 1 2 2-1 1-2-2-1 1z" fill="#555" />
        </Tiny>
      </div>
      <div className="flex w-[19px] items-center text-[11px] font-bold leading-none text-[#555]">
        <span className="text-[#d33]">-</span>?
      </div>
      <div className="flex w-[20px]">
        <Tiny>
          <path d="M5 5l4 8H1z" fill="#7fb765" />
          <text x="8" y="10" fontSize="11" fontWeight="700" fontFamily="Liberation Sans" fill="#777">?</text>
        </Tiny>
      </div>
      <Tiny>
        <circle cx="7.500" cy="7.500" r="6" fill="#a8a7a2" />
        <circle cx="7.500" cy="7.500" r="3.500" fill="#e5e4df" />
        <path d="M6 6l3 3M9 6L6 9" stroke="#777" />
      </Tiny>
    </div>
  );
}

function RightPane() {
  return (
    <div className="flex h-[743px] w-[1247px] shrink-0 flex-col overflow-hidden pl-[4px]">
      <div className="flex h-[30px] w-[1700px] shrink-0 items-end">
        <div className="flex h-[27px] w-[497px] items-center justify-center rounded-tl-[3px] border border-[#b9b6b0] border-b-white bg-[#dfddd8] text-[12px] text-[#2e2e2c]">
          シーン OCC: 1 - ビューアー: 1
        </div>
        <div className="flex h-[27px] w-[500px] items-center justify-center border-y border-r border-[#b9b6b0] border-b-white bg-[#dfddd8] text-[12px] text-[#2e2e2c]">
          VTK scene:2 - viewer:1
        </div>
        <div className="flex h-[30px] w-[497px] items-center justify-center rounded-t-[3px] border-x border-t border-[#b9b6b0] bg-gradient-to-b from-[#f7f5f1] to-[#efede8] text-[12px] text-[#4a8fc7]">
          ParaView シーン:3 - ビューアー:1
        </div>
      </div>
      <div className="flex h-[29px] shrink-0 items-end border-b border-[#b1aea8] bg-[#eeece7]">
        <div className="-mb-px flex h-[29px] w-[107px] items-center rounded-t-[3px] border-x border-t border-[#bcb9b3] bg-[#fdf9f5] pl-[10px] text-[12px] text-[#222]">
          <span className="mr-[4px] block h-[9px] w-[10px] border border-[#222] border-t-2" />
          <span>Layout #1</span>
          <span className="ml-[3px] flex h-[11px] w-[11px] items-center justify-center rounded-[2px] border border-[#55534e]">
            <svg width="7" height="7" viewBox="0 0 7 7">
              <path d="M1 1l5 5M6 1L1 6" stroke="#33322f" strokeWidth="1.400" />
            </svg>
          </span>
        </div>
        <div className="flex h-[26px] w-[30px] items-center justify-center rounded-t-[3px] border-y border-r border-[#bcb9b3] bg-[#e3e1dc] text-[13px] text-[#222]">
          +
        </div>
      </div>
      <ViewerTools />
      <Viewport />
    </div>
  );
}

function ActionButton({ w, off, children }: { w: string; off?: boolean; children: ReactNode }) {
  return (
    <div className={`${w} flex h-[25px] shrink-0 items-center justify-center gap-[3px] rounded-[3px] border border-[#c0bdb7] bg-gradient-to-b from-[#f7f6f3] to-[#eeece7] text-[12px] ${off ? "text-[#b5b3ad]" : "text-[#222]"}`}>
      {children}
    </div>
  );
}

function SmallButton({ children }: { children: ReactNode }) {
  return (
    <div className="flex h-[25px] w-[27px] shrink-0 items-center justify-center rounded-[3px] border border-[#bcb9b3] bg-gradient-to-b from-[#f7f6f3] to-[#eeece7]">
      {children}
    </div>
  );
}

function LeftPane() {
  return (
    <div className="flex h-[743px] w-[394px] shrink-0 flex-col border-r border-[#b5b2ac] bg-[#eeece7]">
      <div className="flex h-[18px] w-[388px] shrink-0 items-center justify-between pb-[2px] pl-[2px] pr-[2px] text-[12px] text-[#2b2b29]">
        <span>パイプのブラウザー</span>
        <DockBtns />
      </div>
      <div className="h-[552px] w-[388px] shrink-0 border-y border-r border-[#b5b2ac] bg-white">
        <div className="flex h-[25px] items-center pl-[42px] text-[12px] text-[#222]">
          <svg width="12" height="22" viewBox="0 0 12 22" className="mr-[5px]">
            <path d="M6 0v4M6 18v4" stroke="#777" />
            <rect x="2" y="4" width="8" height="14" rx="1" fill="#3c3c3c" />
            <rect x="3.500" y="6" width="5" height="2" fill="#ddd" />
            <rect x="4" y="11" width="4" height="5" fill="#888" />
          </svg>
          builtin:
        </div>
        <div className="flex h-[18px] items-center">
          <div className="flex w-[39px] pl-[3px]">
            <svg width="15" height="11" viewBox="0 0 15 11">
              <path d="M0 5.500Q7-2 15 5.500 7 13 0 5.500z" fill="#cfe0f0" stroke="#7a9ab5" strokeWidth=".6" />
              <circle cx="7.500" cy="5.500" r="3.500" fill="#1d7ac4" />
              <circle cx="7.500" cy="5.500" r="1.700" fill="#111" />
            </svg>
          </div>
          <div className="flex h-[18px] w-[97px] items-center bg-[#3a8ac8] pl-[2px] text-[12px] text-white">
            <svg width="16" height="16" viewBox="0 0 16 16" className="mr-[3px]">
              <path d="M1 4l4-3h10v10l-4 4H1z" fill="#3f7f4f" />
              <rect x="5" y="5" width="9" height="9" fill="#5fae5f" />
            </svg>
            tanzyun.med
          </div>
        </div>
      </div>
      <div className="flex h-[6px] w-[388px] shrink-0 items-center justify-center">
        <div className="h-px w-[16px] border-t border-dotted border-[#a8a5a0]" />
      </div>
      <div className="flex h-[29px] w-[388px] shrink-0 items-end border-b border-white">
        <div className="flex h-[29px] w-[181px] items-center justify-center rounded-tr-[3px] border-r border-t border-[#bcb9b3] bg-gradient-to-b from-[#f7f5f1] to-[#eeece7] text-[12px] text-[#2b2b29]">
          オブジェクト インスペクター
        </div>
        <div className="flex h-[27px] w-[47px] items-center justify-center rounded-t-[3px] border-r border-t border-[#bcb9b3] bg-[#dfddd8] text-[12px] text-[#2b2b29]">
          情報
        </div>
      </div>
      <div className="flex h-[20px] w-[388px] shrink-0 items-center justify-between pl-[2px] pr-[3px] text-[12px] text-[#2b2b29]">
        <span>オブジェクト インスペクター</span>
        <DockBtns />
      </div>
      <div className="flex w-[388px] shrink-0 gap-[3px] pl-[7px] pt-[9px]">
        <ActionButton w="w-[91px]" off>
          <svg width="17" height="17" viewBox="0 0 24 24">
            <path d="M3 10l6-3 7 2v10l-7 3-6-2z" fill="#d9d8d3" stroke="#bbb" />
            <path d="M12 3h9v9l-3-3-4 4-3-3 4-4z" fill="#e5e4df" stroke="#bbb" />
          </svg>
          適用
        </ActionButton>
        <ActionButton w="w-[91px]" off>
          <svg width="15" height="15" viewBox="0 0 15 15">
            <circle cx="7.500" cy="7.500" r="7" fill="#b9b7b1" />
            <path d="M4 11l7-7" stroke="#eeece7" strokeWidth="2" />
          </svg>
          Reset
        </ActionButton>
        <ActionButton w="-ml-px w-[92px]">
          <svg width="14" height="14" viewBox="0 0 14 14">
            <path d="M1 3l2-2 4 4 4-4 2 2-4 4 4 4-2 2-4-4-4 4-2-2 4-4z" fill="#e8553c" stroke="#b53b26" strokeWidth=".5" />
          </svg>
          Delete
        </ActionButton>
        <ActionButton w="-ml-px w-[91px]">
          <span className="text-[18px] font-bold leading-none text-[#2d8fd5]">?</span>
        </ActionButton>
      </div>
      <div className="flex w-[388px] shrink-0 items-center gap-[3px] pl-[7px] pt-[7px]">
        <div className="flex h-[26px] w-[345px] shrink-0 items-center rounded-[3px] border border-[#b5b2ac] bg-white pl-[2px] text-[12px] text-[#8d8b86]">
          Search ... (use Esc to clear text)
        </div>
        <div className="flex h-[25px] w-[24px] shrink-0 items-center justify-center rounded-[3px] border border-[#c0bdb7] bg-[#f3f1ed]">
          <svg width="17" height="17" viewBox="0 0 24 24">
            <circle cx="12" cy="12" r="4" fill="none" stroke="#8f959a" strokeWidth="1.500" />
            <path d="M12 2l2 3 3-1 1 3 3 1-1 3 2 1-2 2 1 3-3 1-1 3-3-1-2 3-2-3-3 1-1-3-3-1 1-3-2-2 2-1-1-3 3-1 1-3 3 1z" fill="none" stroke="#8f959a" strokeWidth="1.300" />
          </svg>
        </div>
      </div>
      <div className="flex w-[388px] flex-1 gap-[4px] overflow-hidden pl-[7px] pt-[6px]">
        <div className="flex h-[28px] w-[230px] shrink-0 items-center border border-[#c0bdb7] bg-[#eeece7] pl-[10px] text-[12px] font-bold text-[#111]">
          <span className="mr-[8px] block h-[5px] w-[13px] border border-[#1c2f7a] bg-[#8fa3d8]" />
          Properties (tanzyun.med)
        </div>
        <div className="flex gap-[5px] pt-[2px]">
          <SmallButton>
            <svg width="16" height="16" viewBox="0 0 16 16">
              <path d="M2 4h7v11H2z" fill="#eee" stroke="#222" />
              <path d="M7 1h7v11H7z" fill="#444" stroke="#222" />
            </svg>
          </SmallButton>
          <SmallButton>
            <svg width="16" height="16" viewBox="0 0 16 16">
              <path d="M2 3h9v11H2z" fill="#999" stroke="#888" />
              <path d="M8 7h6v8H8z" fill="#ddd" stroke="#888" />
            </svg>
          </SmallButton>
          <SmallButton>
            <svg width="16" height="16" viewBox="0 0 16 16">
              <path d="M12 4a6 6 0 1 0 2 5" fill="none" stroke="#a5a49f" strokeWidth="2" />
              <path d="M9 2h6v6z" fill="#c9c8c3" stroke="#a5a49f" strokeWidth=".5" />
            </svg>
          </SmallButton>
          <SmallButton>
            <svg width="16" height="18" viewBox="0 0 16 18">
              <path d="M6 1h4v7h3l-5 5-5-5h3z" fill="#6cc21f" stroke="#4f8a20" strokeWidth=".5" />
              <path d="M2 12v5h12v-5" fill="#fff" stroke="#555" />
              <path d="M4 14h8" stroke="#d33" />
            </svg>
          </SmallButton>
        </div>
        <div className="-ml-[4px] flex h-full w-[14px] shrink-0 flex-col items-center bg-[#f6f4f0]">
          <svg width="9" height="6" viewBox="0 0 9 6" className="mt-[5px]">
            <path d="M0 6h9L4.500 0z" fill="#444" />
          </svg>
          <div className="mt-[6px] h-full w-full border-y border-[#d8d5cf] bg-white" />
        </div>
      </div>
    </div>
  );
}

export default function App() {
  return (
    <div className="flex h-[915px] w-[1641px] flex-col overflow-hidden bg-[#eeece7] font-[family-name:'Noto_Sans_CJK_JP',sans-serif]">
      <div className="flex h-[24px] shrink-0 items-center bg-[#3c3b37] pb-[9px] pl-[14px] text-[14.800px] text-[#8f8c85]">
        <span className="mr-[14px] block h-[9px] w-[9px] rounded-full bg-[#c9c7c1] shadow-[0_0_0_2px_#55534f]" />
        SALOME 9.3.0 - [tanzyun]
      </div>
      <div className="flex h-[28px] shrink-0 items-center border-b border-[#cfccc6] pb-[2px]">
        <MenuItem w="w-[77px]" label="ファイル" k="F" />
        <MenuItem w="w-[54px]" label="編集" k="E" />
        <MenuItem w="w-[54px]" label="表示" k="V" />
        <MenuItem w="w-[66px]" label="ツール" k="T" />
        <MenuItem w="w-[65px]" label="ソース" k="S" />
        <MenuItem w="w-[85px]" label="フィルター" k="i" />
        <MenuItem w="w-[68px]" label="マクロ" k="M" />
        <MenuItem w="w-[92px]" label="ウィンドウ" k="W" />
        <MenuItem w="w-[38px]" label="触媒" />
        <MenuItem w="w-[64px]" label="ヘルプ" k="H" />
      </div>
      <Row1 />
      <Row2 />
      <Row3 />
      <div className="h-[4px] shrink-0 border-y border-[#a8a5a0] bg-[#c2bfb9]" />
      <div className="flex min-h-0 flex-1">
        <LeftPane />
        <RightPane />
      </div>
    </div>
  );
}
